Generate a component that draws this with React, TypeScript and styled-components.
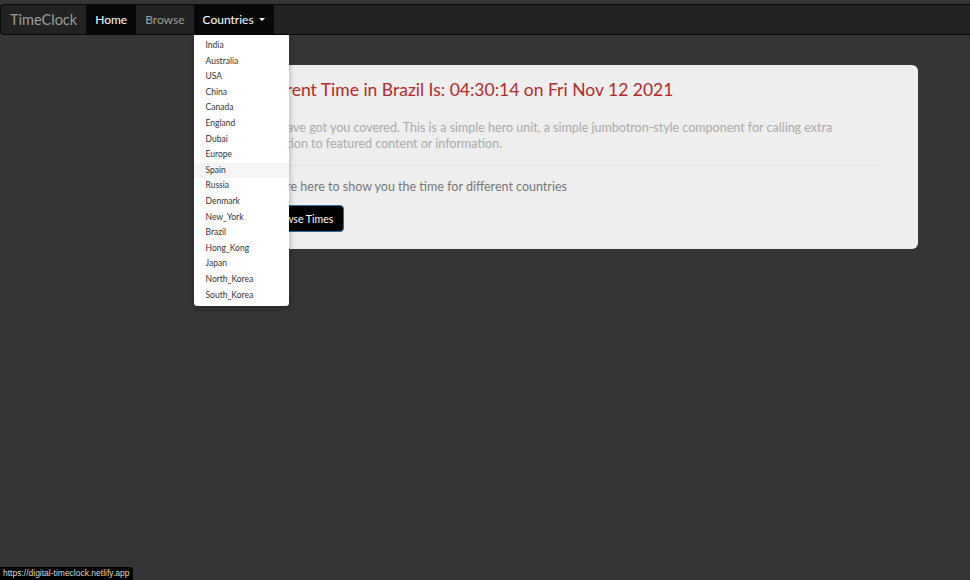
import React from "react";
import styled, { createGlobalStyle } from "styled-components";

const Global = createGlobalStyle`
  html, body { margin: 0; padding: 0; background: #363535; }
  body { font-family: "Lato", "Open Sans", sans-serif; height: 580px; overflow: hidden; }
  * { box-sizing: border-box; }
`;

const Page = styled.div`
  padding-top: 4px;
  min-height: 580px;
`;

const Navbar = styled.nav`
  display: flex;
  align-items: stretch;
  height: 31px;
  background: #222;
  border: 1px solid #080808;
  border-right: none;
  border-radius: 4px 0 0 4px;
`;

const Brand = styled.a`
  display: flex;
  align-items: center;
  padding: 0 9px 0 9px;
  font-size: 14.5px;
  color: #9d9d9d;
`;

const NavItem = styled.div<{ $active?: boolean }>`
  position: relative;
  display: flex;
  align-items: center;
  padding: 0 9px;
  font-size: 12px;
  color: ${(p) => (p.$active ? "#fff" : "#9d9d9d")};
  background: ${(p) => (p.$active ? "#080808" : "transparent")};
`;

const Caret = styled.span`
  display: inline-block;
  margin-left: 5px;
  border-top: 3px solid #fff;
  border-left: 3px solid transparent;
  border-right: 3px solid transparent;
  vertical-align: middle;
`;

const Menu = styled.ul`
  position: absolute;
  top: 30px;
  left: 0;
  z-index: 10;
  margin: 0;
  padding: 3px 0;
  width: 95px;
  list-style: none;
  background: #fff;
  border-radius: 0 0 3px 3px;
  box-shadow: 0 3px 6px rgba(0, 0, 0, 0.3);
`;

const MenuItem = styled.li<{ $hover?: boolean }>`
  height: 15.6px;
  line-height: 15.6px;
  padding: 0 12px;
  font-size: 8.5px;
  color: #333;
  background: ${(p) => (p.$hover ? "#f5f5f5" : "transparent")};
`;

const Main = styled.main`
  padding: 30px 52px 0 222px;
`;

const Jumbotron = styled.section`
  background: #eee;
  border-radius: 6px;
  padding: 13px 36px 17px 36px;
`;

const Heading = styled.h1`
  margin: 0;
  font-size: 17.5px;
  font-weight: 400;
  line-height: 24px;
  color: #b22a2a;
`;

const Lead = styled.p`
  margin: 18px 0 0;
  font-size: 12.5px;
  line-height: 16px;
  color: #aaa;
`;

const Rule = styled.hr`
  margin: 13px 0 0;
  border: none;
  border-top: 1px solid #e2e2e2;
`;

const Text = styled.p`
  margin: 13px 0 0;
  font-size: 12.5px;
  line-height: 16px;
  color: #777;
`;

const Button = styled.button`
  display: block;
  margin-top: 10px;
  height: 27px;
  padding: 0 10px;
  font-family: inherit;
  font-size: 10.5px;
  color: #fff;
  background: #000;
  border: 1px solid #2e6da4;
  border-radius: 4px;
`;

const Status = styled.div`
  position: fixed;
  left: 0;
  bottom: 0;
  padding: 1px 4px 2px 3px;
  font-family: "Liberation Sans", sans-serif;
  font-size: 8.5px;
  color: #ddd;
  background: #000;
  border-radius: 0 3px 0 0;
`;

const countries = [
  "India", "Australia", "USA", "China", "Canada", "England", "Dubai", "Europe",
  "Spain", "Russia", "Denmark", "New_York", "Brazil", "Hong_Kong", "Japan",
  "North_Korea", "South_Korea",
];

export default function App() {
  return (
    <Page>
      <Global />
      <Navbar>
        <Brand>TimeClock</Brand>
        <NavItem $active>Home</NavItem>
        <NavItem>Browse</NavItem>
        <NavItem $active>
          Countries<Caret />
          <Menu>
            {countries.map((c) => (
              <MenuItem key={c} $hover={c === "Spain"}>{c}</MenuItem>
            ))}
          </Menu>
        </NavItem>
      </Navbar>
      <Main>
        <Jumbotron>
          <Heading>Current Time in Brazil Is: 04:30:14 on Fri Nov 12 2021</Heading>
          <Lead>
            We have got you covered. This is a simple hero unit, a simple jumbotron-style component for calling extra
            attention to featured content or information.
          </Lead>
          <Rule />
          <Text>We are here to show you the time for different countries</Text>
          <Button>Browse Times</Button>
        </Jumbotron>
      </Main>
      <Status>https://digital-timeclock.netlify.app</Status>
    </Page>
  );
}
